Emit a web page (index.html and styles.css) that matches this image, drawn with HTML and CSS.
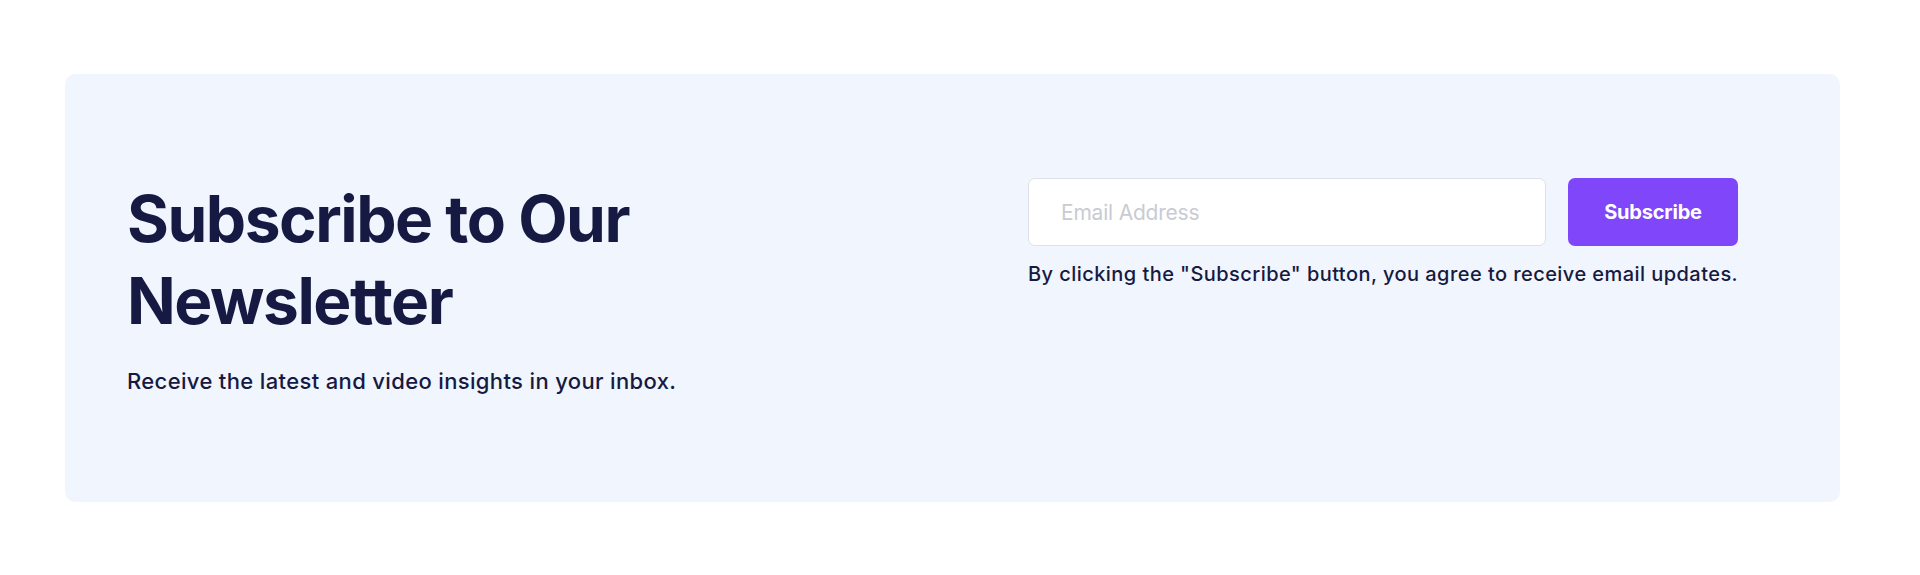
FILE: index.html
```html
<!DOCTYPE html>
<html lang="en">
<head>
<meta charset="utf-8">
<title>Newsletter</title>
<link rel="stylesheet" href="styles.css">
</head>
<body>
<section class="newsletter">
  <div class="intro">
    <h2 class="title">Subscribe to Our<br>Newsletter</h2>
    <p class="lead">Receive the latest and video insights in your inbox.</p>
  </div>
  <div class="signup">
    <form class="form" onsubmit="return false">
      <input class="email" type="email" placeholder="Email Address">
      <button class="btn" type="submit">Subscribe</button>
    </form>
    <p class="note">By clicking the "Subscribe" button, you agree to receive email updates.</p>
  </div>
</section>
</body>
</html>
```
FILE: styles.css
```css
* { box-sizing: border-box; }
html, body { margin: 0; padding: 0; background: #ffffff; }
body {
  font-family: Inter, "Noto Sans", sans-serif;
  color: #161a42;
  padding: 74px 80px 73px 65px;
}
.newsletter {
  background: #f1f5fe;
  border-radius: 10px;
  height: 428px;
  display: flex;
  justify-content: space-between;
  align-items: flex-start;
  padding: 104px 102px 0 62px;
}
.title {
  margin: 0;
  font-size: 64px;
  line-height: 82px;
  font-weight: 700;
  letter-spacing: -0.023em;
  color: #161a42;
}
.lead {
  margin: 23px 0 0;
  font-size: 22px;
  line-height: 33px;
  font-weight: 450;
  letter-spacing: 0.016em;
  color: #161a42;
}
.signup { width: 710px; }
.form {
  display: flex;
  gap: 22px;
  margin: 0;
}
.email {
  flex: 1;
  height: 68px;
  border: 1px solid #dfe1e8;
  border-radius: 7px;
  background: #ffffff;
  padding: 0 32px;
  font-family: inherit;
  font-size: 21px;
  letter-spacing: -0.01em;
  color: #161a42;
  outline: none;
}
.email::placeholder { color: #c9cbd3; }
.btn {
  width: 170px;
  height: 68px;
  border: 0;
  border-radius: 7px;
  background: #8047fa;
  color: #ffffff;
  font-family: inherit;
  font-size: 20px;
  font-weight: 700;
  letter-spacing: -0.01em;
  cursor: pointer;
}
.note {
  margin: 13px 0 0;
  font-size: 20px;
  line-height: 30px;
  font-weight: 500;
  letter-spacing: 0.022em;
  white-space: nowrap;
  color: #161a42;
}
```
